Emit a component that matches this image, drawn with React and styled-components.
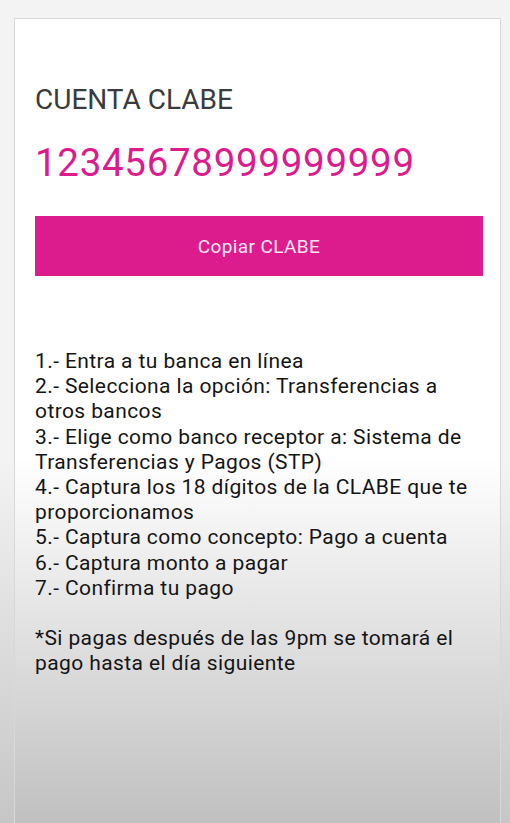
import styled, { createGlobalStyle } from 'styled-components';

const GlobalStyle = createGlobalStyle`
  html, body {
    margin: 0;
    padding: 0;
    height: 100%;
    overflow: hidden;
  }
  body {
    font-family: Roboto, 'Liberation Sans', sans-serif;
    background: linear-gradient(to bottom, #f3f3f3 0px, #f3f3f3 460px, #c6c6c6 823px);
  }
`;

const PINK = '#dc1b8c';

const Page = styled.div`
  height: 823px;
  padding: 18px 9px 0 14px;
  box-sizing: border-box;
  display: flex;
`;

const Card = styled.div`
  flex: 1;
  border: 1px solid #d8d8d8;
  border-bottom: none;
  background: linear-gradient(to bottom, #ffffff 0px, #ffffff 440px, #c0c0c0 805px);
  padding: 64px 17px 0 20px;
  display: flex;
  flex-direction: column;
`;

const Title = styled.h2`
  margin: 0;
  font-size: 28px;
  font-weight: 400;
  line-height: 34px;
  color: #3b3b3b;
`;

const Clabe = styled.div`
  margin-top: 23px;
  font-size: 38.5px;
  line-height: 46px;
  color: ${PINK};
  letter-spacing: 0.7px;
`;

const CopyButton = styled.button`
  margin-top: 30px;
  height: 60px;
  border: none;
  background: ${PINK};
  color: #fbe6f1;
  font-family: Roboto, 'Liberation Sans', sans-serif;
  font-size: 19px;
  letter-spacing: 0.4px;
  cursor: pointer;
`;

const Steps = styled.div`
  margin-top: 73px;
  padding-right: 10px;
  font-size: 21px;
  line-height: 25.2px;
  letter-spacing: 0.4px;
  color: #151515;
`;

const Step = styled.p`
  margin: 0;
`;

const Note = styled.p`
  margin: 25px 0 0;
`;

const steps = [
  '1.- Entra a tu banca en línea',
  ['2.- Selecciona la opción: Transferencias a', 'otros bancos'],
  ['3.- Elige como banco receptor a: Sistema de', 'Transferencias y Pagos (STP)'],
  ['4.- Captura los 18 dígitos de la CLABE que te', 'proporcionamos'],
  '5.- Captura como concepto: Pago a cuenta',
  '6.- Captura monto a pagar',
  '7.- Confirma tu pago',
];

const App = () => {
  return (
    <>
      <GlobalStyle />
      <Page>
        <Card>
          <Title>CUENTA CLABE</Title>
          <Clabe>12345678999999999</Clabe>
          <CopyButton>Copiar CLABE</CopyButton>
          <Steps>
            {steps.map((s, i) => (
              <Step key={i}>
                {Array.isArray(s) ? (
                  <>
                    {s[0]}
                    <br />
                    {s[1]}
                  </>
                ) : (
                  s
                )}
              </Step>
            ))}
            <Note>
              *Si pagas después de las 9pm se tomará el
              <br />
              pago hasta el día siguiente
            </Note>
          </Steps>
        </Card>
      </Page>
    </>
  );
};

export default App;
